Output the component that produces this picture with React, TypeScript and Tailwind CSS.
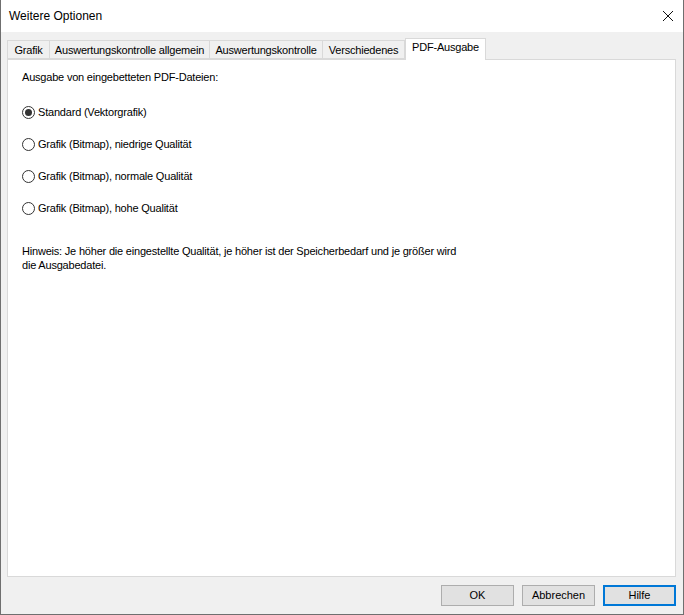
import React from "react";

const font = { fontFamily: '"Liberation Sans", Arial, sans-serif' };

function Radio({ checked, label }: { checked?: boolean; label: string }) {
  return (
    <div className="flex items-center h-[14px]">
      <div className="w-[13px] h-[13px] rounded-full border border-[#333333] bg-white flex items-center justify-center">
        {checked && <div className="w-[7px] h-[7px] rounded-full bg-[#333333]" />}
      </div>
      <span className="ml-[3px] text-[11px] tracking-[-0.2px] text-black leading-[13px]">{label}</span>
    </div>
  );
}

function Tab({ label, active, w }: { label: string; active?: boolean; w: string }) {
  if (active) {
    return (
      <div className={"relative z-10 -mb-px h-[22px] bg-white border border-b-0 border-[#d9d9d9] pt-[1px] text-center text-[11px] tracking-[-0.2px] leading-[14px] text-black " + w}>
        {label}
      </div>
    );
  }
  return (
    <div className={"h-[19px] bg-[#f0f0f0] border border-[#d9d9d9] border-l-0 first:border-l pt-[2px] text-center text-[11px] tracking-[-0.2px] leading-[14px] text-black whitespace-nowrap " + w}>
      {label}
    </div>
  );
}

function Button({ label, focused }: { label: string; focused?: boolean }) {
  return (
    <div
      className={
        "w-[73px] h-[21px] flex items-center justify-center bg-[#e1e1e1] text-[11px] text-black " +
        (focused ? "border-2 border-[#0078d7]" : "border border-[#adadad]")
      }
    >
      {label}
    </div>
  );
}

export default function App() {
  return (
    <div
      className="w-[684px] h-[615px] flex flex-col bg-[#f0f0f0] border-l border-r border-b border-[#6f6f6f] overflow-hidden"
      style={font}
    >
      <div className="h-[32px] shrink-0 bg-white flex items-center justify-between pl-[8px] pr-[8px]">
        <span className="text-[12px] text-black">Weitere Optionen</span>
        <svg width="12" height="12" viewBox="0 0 12 12" className="mr-[1px]">
          <path d="M1 1 L11 11 M11 1 L1 11" stroke="#111" strokeWidth="1" />
        </svg>
      </div>
      <div className="flex-1 flex flex-col pl-[6px] pr-[7px] pt-[6px]">
        <div className="flex items-end h-[21px]">
          <div className="flex items-end">
            <Tab label="Grafik" w="w-[43px]" />
            <Tab label="Auswertungskontrolle allgemein" w="w-[160px]" />
            <Tab label="Auswertungskontrolle" w="w-[113px]" />
            <Tab label="Verschiedenes" w="w-[82px]" />
          </div>
          <Tab label="PDF-Ausgabe" active w="w-[81px]" />
        </div>
        <div className="h-[518px] bg-white border border-[#d9d9d9] pl-[14px] pt-[11px]">
          <div className="text-[11px] tracking-[-0.2px] leading-[13px] text-black">Ausgabe von eingebetteten PDF-Dateien:</div>
          <div className="flex flex-col gap-[18px] mt-[21px]">
            <Radio checked label="Standard (Vektorgrafik)" />
            <Radio label="Grafik (Bitmap), niedrige Qualität" />
            <Radio label="Grafik (Bitmap), normale Qualität" />
            <Radio label="Grafik (Bitmap), hohe Qualität" />
          </div>
          <div className="mt-[29px] w-[446px] text-[11px] tracking-[-0.2px] leading-[14px] text-black">
            Hinweis: Je höher die eingestellte Qualität, je höher ist der Speicherbedarf und je größer wird die Ausgabedatei.
          </div>
        </div>
        <div className="flex justify-end gap-[8px] mt-[8px]">
          <Button label="OK" />
          <Button label="Abbrechen" />
          <Button label="Hilfe" focused />
        </div>
      </div>
    </div>
  );
}
